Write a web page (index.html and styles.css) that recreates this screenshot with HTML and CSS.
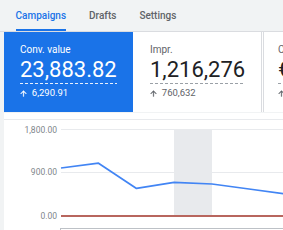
FILE: index.html
```html
<!DOCTYPE html>
<html>
<head>
<meta charset="utf-8">
<link rel="stylesheet" href="styles.css">
</head>
<body>
<div class="tabs">
  <div class="tab active">Campaigns</div>
  <div class="tab">Drafts</div>
  <div class="tab">Settings</div>
</div>
<div class="main">
  <div class="cards">
    <div class="card selected">
      <div class="label">Conv. value</div>
      <div class="value">23,883.82</div>
      <div class="delta"><svg class="arrow" viewBox="0 0 24 24"><path d="M4 12l1.41 1.41L11 7.83V20h2V7.83l5.58 5.59L20 12l-8-8-8 8z"/></svg><span>6,290.91</span></div>
    </div>
    <div class="card second">
      <div class="label">Impr.</div>
      <div class="value">1,216,276</div>
      <div class="delta"><svg class="arrow" viewBox="0 0 24 24"><path d="M4 12l1.41 1.41L11 7.83V20h2V7.83l5.58 5.59L20 12l-8-8-8 8z"/></svg><span>760,632</span></div>
    </div>
    <div class="card third">
      <div class="label">Cost</div>
      <div class="value">€12,480.15</div>
      <div class="delta"><svg class="arrow" viewBox="0 0 24 24"><path d="M4 12l1.41 1.41L11 7.83V20h2V7.83l5.58 5.59L20 12l-8-8-8 8z"/></svg><span>3,512.40</span></div>
    </div>
  </div>
  <div class="chart">
    <svg class="plot" width="279" height="110" viewBox="4 120 279 110">
      <rect x="174" y="129" width="38" height="86" fill="#e8eaed"/>
      <line x1="61" y1="129.5" x2="283" y2="129.5" stroke="#e8eaed" stroke-width="1"/>
      <line x1="61" y1="172.5" x2="283" y2="172.5" stroke="#e8eaed" stroke-width="1"/>
      <line x1="61" y1="216" x2="283" y2="216" stroke="#b8665e" stroke-width="2"/>
      <polyline points="61,168 98.5,163.2 136.5,188.4 174,182.3 212,184 249,189 287,194.2" fill="none" stroke="#4285f4" stroke-width="1.75" stroke-linejoin="round"/>
      <line x1="60" y1="228.5" x2="283" y2="228.5" stroke="#bdc1c6" stroke-width="1"/>
      <line x1="60.5" y1="228" x2="60.5" y2="230" stroke="#bdc1c6" stroke-width="1"/>
      <text class="axis" x="57" y="132.5">1,800.00</text>
      <text class="axis" x="57" y="175.3">900.00</text>
      <text class="axis" x="57" y="218.6">0.00</text>
    </svg>
  </div>
</div>
</body>
</html>
```

FILE: styles.css
```css
html, body {
  margin: 0;
  padding: 0;
}
body {
  width: 283px;
  height: 230px;
  overflow: hidden;
  background: #f1f3f4;
  font-family: Roboto, "Liberation Sans", Arial, sans-serif;
}
.tabs {
  display: flex;
  height: 31px;
  padding-left: 4px;
  border-bottom: 1px solid #dadce0;
}
.tab {
  box-sizing: border-box;
  height: 31px;
  margin: 0 11.5px;
  padding-top: 10px;
  font-size: 10px;
  line-height: 12px;
  font-weight: 500;
  color: #5f6368;
  border-bottom: 2px solid transparent;
  white-space: nowrap;
}
.tab.active {
  color: #1a73e8;
  border-bottom-color: #1a73e8;
}
.main {
  margin-left: 4px;
  height: 198px;
  background: #fff;
  overflow: hidden;
}
.cards {
  display: flex;
  height: 80px;
  border-bottom: 1px solid #f1f3f4;
}
.card {
  box-sizing: border-box;
  flex: none;
  width: 129px;
  height: 80px;
  padding: 12px 0 0 16px;
  color: #5f6368;
  white-space: nowrap;
}
.card.selected {
  background: #1a73e8;
  color: #fff;
}
.card.second {
  border-left: 1px solid #fff;
  border-right: 1px solid #dadce0;
}
.card.third {
  width: 140px;
  margin-left: 1px;
  border-left: 1px solid #dadce0;
  padding-left: 14px;
}
.label {
  font-size: 10px;
  line-height: 12px;
}
.value {
  display: inline-block;
  margin-top: 1px;
  padding-bottom: 1px;
  font-size: 22px;
  line-height: 26px;
  color: #202124;
  background: repeating-linear-gradient(to right, #9aa0a6 0 3px, transparent 3px 5px) left bottom / 100% 1px no-repeat;
}
.selected .value {
  color: #fff;
  background-image: repeating-linear-gradient(to right, #e8f0fe 0 3px, transparent 3px 5px);
}
.delta {
  display: flex;
  align-items: center;
  margin-top: 3px;
  font-size: 9.5px;
  line-height: 12px;
}
.arrow {
  width: 9px;
  height: 9px;
  margin-left: -1px;
  margin-right: 3.8px;
  fill: currentColor;
  stroke: currentColor;
  stroke-width: 0.8px;
}
.chart {
  margin-top: 6px;
  border-top: 1px solid #e8eaed;
}
.plot {
  display: block;
}
.axis {
  font-family: Roboto, "Liberation Sans", Arial, sans-serif;
  font-size: 8.5px;
  fill: #80868b;
  text-anchor: end;
}
```
